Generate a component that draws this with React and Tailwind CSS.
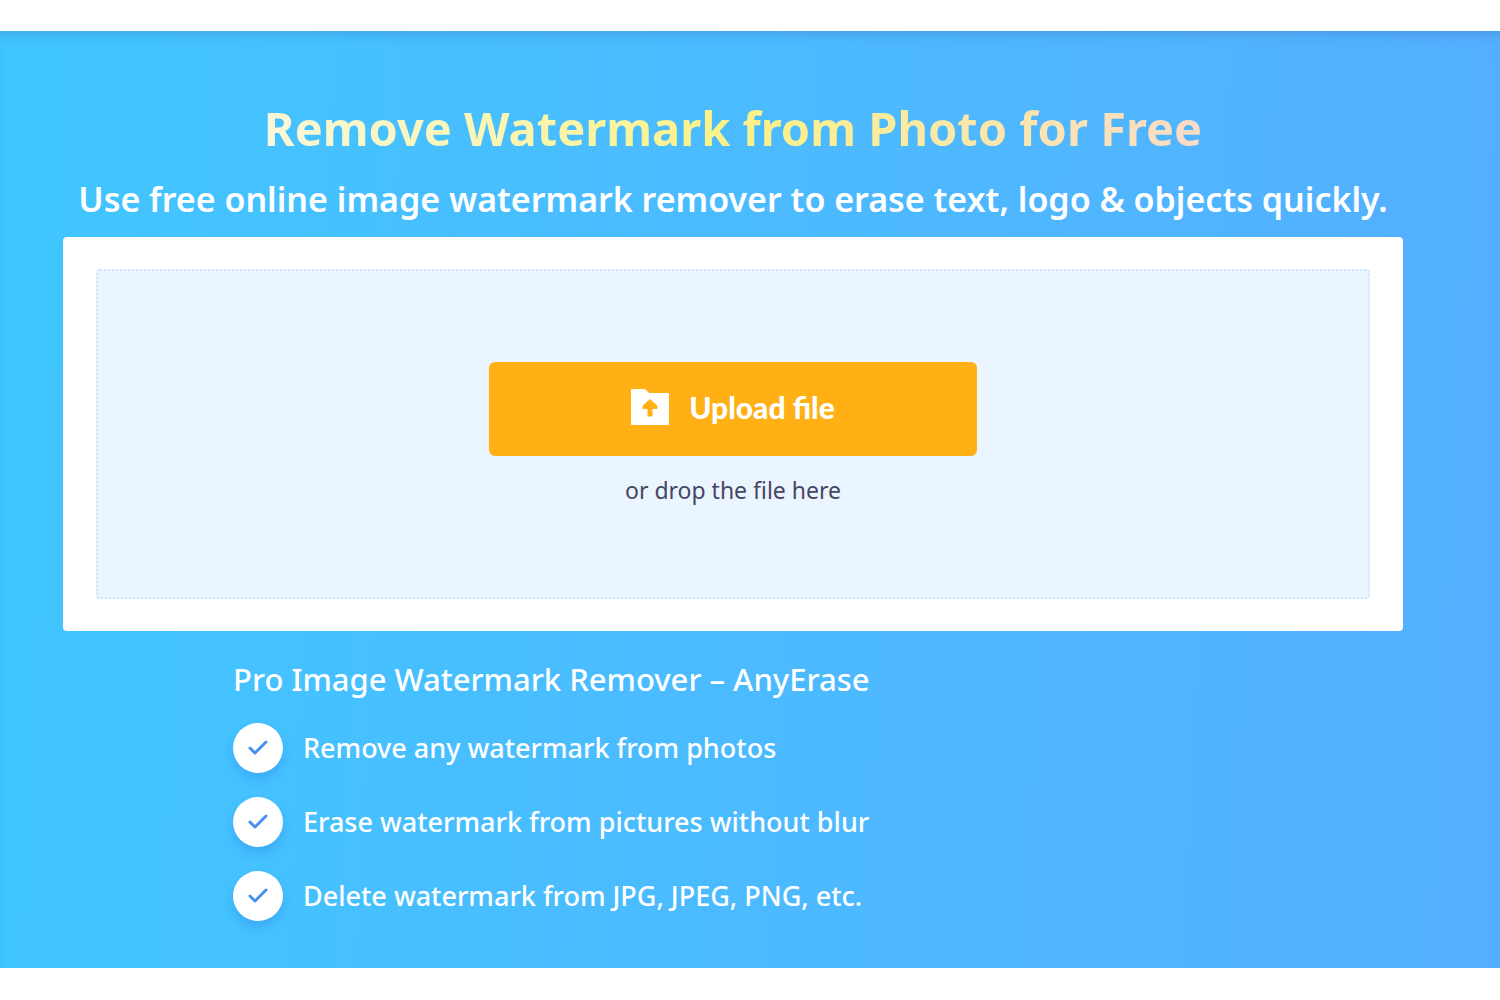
const perks = [
  'Remove any watermark from photos',
  'Erase watermark from pictures without blur',
  'Delete watermark from JPG, JPEG, PNG, etc.',
];

function FolderUpIcon() {
  return (
    <svg viewBox="0 0 38 36" className="h-9 w-[38px]" aria-hidden="true">
      <path fill="#fff" d="M1 0h12q2 0 3 2t3 2h18a1 1 0 0 1 1 1v30a1 1 0 0 1-1 1H1a1 1 0 0 1-1-1V1a1 1 0 0 1 1-1z" />
      <path d="M19 10.5l7 6.500v2.500h-5V27h-4v-7.500h-5V17z" fill="#ffb015" stroke="#ffb015" strokeLinejoin="round" />
    </svg>
  );
}

function Check() {
  return (
    <span className="flex size-[50px] shrink-0 items-center justify-center rounded-full bg-white shadow-[0_6px_10px_rgba(40,120,230,0.3)]">
      <svg viewBox="0 0 22 18" className="h-[18px] w-[22px]" fill="none" stroke="#4a90ea" strokeWidth="3" strokeLinecap="round" strokeLinejoin="round" aria-hidden="true">
        <path d="M3 9l5 5L19 3" />
      </svg>
    </span>
  );
}

export default function App() {
  return (
    <div className="bg-white pt-[31px] pb-8 font-['Noto_Sans',sans-serif]">
      <main className="bg-linear-93 from-[#40c6ff] to-[#54afff] pt-[67px] pb-[47px] text-white shadow-[inset_0_10px_14px_-8px_rgba(60,100,160,0.35)]">
        <div className="mr-[97px] ml-[63px]">
          <h1 className="text-center text-[47px] leading-[60px] font-bold whitespace-nowrap">
            <span className="bg-linear-to-r from-[#f9f7d8] via-[#fbf286] to-[#fadcc5] bg-clip-text text-transparent">Remove Watermark from Photo for Free</span>
          </h1>
          <p className="mt-[11px] text-center text-[34px] leading-[60px] font-semibold whitespace-nowrap">
            Use free online image watermark remover to erase text, logo &amp; objects quickly.
          </p>
          <section className="mt-2 rounded bg-white px-[33px] py-8">
            <div className="flex flex-col items-center rounded border-2 border-dotted border-[#cfe5fb] bg-[#ebf5ff] pt-[91px] pb-[87px]">
              <button type="button" className="flex h-[94px] w-[488px] items-center justify-center gap-5 rounded-md bg-[#ffb015] pb-1 font-['Lato',sans-serif] text-[30px] font-black">
                <FolderUpIcon />
                Upload file
              </button>
              <p className="mt-3.5 text-[23px] leading-10 text-[#454663]">or drop the file here</p>
            </div>
          </section>
          <section className="mt-6 ml-[170px]">
            <h2 className="text-[31px] leading-[48px] font-medium">Pro Image Watermark Remover – AnyErase</h2>
            <ul className="mt-5 flex flex-col gap-6">
              {perks.map((perk) => (
                <li key={perk} className="flex items-center gap-5 text-[27px] leading-10 font-medium">
                  <Check />
                  {perk}
                </li>
              ))}
            </ul>
          </section>
        </div>
      </main>
    </div>
  );
}
